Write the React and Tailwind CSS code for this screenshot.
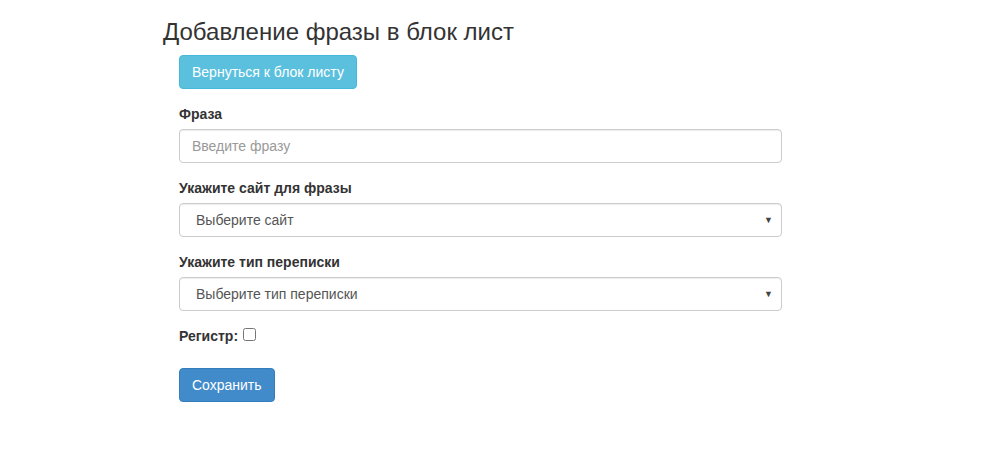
import React from 'react';

const App = () => {
    return (
        <div className="min-h-[462px] bg-white text-[#333] text-[14px] leading-[20px]" style={{ fontFamily: '"Liberation Sans", Arial, sans-serif' }}>
            <div className="pl-[163px] pt-[19px]">
                <h3 className="text-[24px] leading-[26px] font-medium mb-[10px]">Добавление фразы в блок лист</h3>
                <div className="pl-[16px] w-[619px]">
                    <button className="h-[34px] px-[12px] bg-[#5bc0de] border border-[#46b8da] rounded-[4px] text-white">
                        Вернуться к блок листу
                    </button>

                    <form className="mt-[15px]" onSubmit={(e) => e.preventDefault()}>
                        <div className="mb-[15px]">
                            <label className="block font-bold mb-[5px]">Фраза</label>
                            <input
                                type="text"
                                placeholder="Введите фразу"
                                className="block w-full h-[34px] px-[12px] border border-[#ccc] rounded-[4px] shadow-[inset_0_1px_1px_rgba(0,0,0,0.075)] placeholder:text-[#999] outline-none"
                            />
                        </div>

                        <div className="mb-[15px]">
                            <label className="block font-bold mb-[5px]">Укажите сайт для фразы</label>
                            <div className="relative h-[34px] border border-[#ccc] rounded-[4px] shadow-[inset_0_1px_1px_rgba(0,0,0,0.075)] flex items-center pl-[16px] text-[#555]">
                                Выберите сайт
                                <span className="absolute right-[8px] top-[11px] text-[9px] leading-[10px] text-[#444]">▼</span>
                            </div>
                        </div>

                        <div className="mb-[15px]">
                            <label className="block font-bold mb-[5px]">Укажите тип переписки</label>
                            <div className="relative h-[34px] border border-[#ccc] rounded-[4px] shadow-[inset_0_1px_1px_rgba(0,0,0,0.075)] flex items-center pl-[16px] text-[#555]">
                                Выберите тип переписки
                                <span className="absolute right-[8px] top-[11px] text-[9px] leading-[10px] text-[#444]">▼</span>
                            </div>
                        </div>

                        <div className="mb-[22px] flex items-center h-[20px]">
                            <label className="font-bold">Регистр:</label>
                            <input type="checkbox" className="ml-[5px] w-[13px] h-[13px] -mt-[4px]" />
                        </div>

                        <button type="submit" className="h-[34px] px-[12px] bg-[#428bca] border border-[#357ebd] rounded-[4px] text-white">
                            Сохранить
                        </button>
                    </form>
                </div>
            </div>
        </div>
    );
};

export default App;
